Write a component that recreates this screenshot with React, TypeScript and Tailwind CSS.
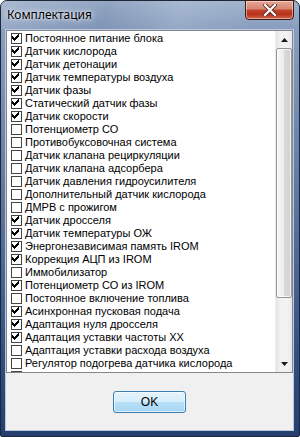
import React from "react";

const items: [string, boolean][] = [
  ["Постоянное питание блока", true],
  ["Датчик кислорода", true],
  ["Датчик детонации", true],
  ["Датчик температуры воздуха", true],
  ["Датчик фазы", true],
  ["Статический датчик фазы", true],
  ["Датчик скорости", true],
  ["Потенциометр СО", false],
  ["Противобуксовочная система", false],
  ["Датчик клапана рециркуляции", false],
  ["Датчик клапана адсорбера", false],
  ["Датчик давления гидроусилителя", false],
  ["Дополнительный датчик кислорода", false],
  ["ДМРВ с прожигом", false],
  ["Датчик дросселя", true],
  ["Датчик температуры ОЖ", true],
  ["Энергонезависимая память IROM", true],
  ["Коррекция АЦП из IROM", true],
  ["Иммобилизатор", false],
  ["Потенциометр СО из IROM", true],
  ["Постоянное включение топлива", false],
  ["Асинхронная пусковая подача", true],
  ["Адаптация нуля дросселя", true],
  ["Адаптация уставки частоты ХХ", true],
  ["Адаптация уставки расхода воздуха", false],
  ["Регулятор подогрева датчика кислорода", false],
  ["", false],
];

const checkPixels: [number, number][] = [
  [7, 1],
  [6, 2], [7, 2],
  [1, 3], [5, 3], [6, 3], [7, 3],
  [1, 4], [2, 4], [4, 4], [5, 4], [6, 4],
  [1, 5], [2, 5], [3, 5], [4, 5], [5, 5],
  [2, 6], [3, 6], [4, 6],
  [3, 7],
];

function Check({ checked }: { checked: boolean }) {
  return (
    <div className="w-[11px] h-[11px] border border-[#444] bg-white relative shrink-0">
      {checked && (
        <svg
          width="9"
          height="9"
          viewBox="0 0 9 9"
          className="absolute left-0 top-0"
          shapeRendering="crispEdges"
        >
          {checkPixels.map(([x, y], i) => (
            <rect key={i} x={x - 1} y={y - 1} width="1" height="1" fill="#000" />
          ))}
        </svg>
      )}
    </div>
  );
}

export default function App() {
  return (
    <div className="w-[300px] h-[437px] bg-white overflow-hidden">
      <div className="w-[300px] h-[437px] rounded-t-[7px] rounded-b-[2px] border border-[#1d2738] bg-[linear-gradient(180deg,#9fb2cc_0%,#8a9fbf_6%,#6f87ad_30%,#4d6895_60%,#2f4c80_85%,#253f70_100%)] flex flex-col relative">
        {/* title bar */}
        <div className="h-[28px] shrink-0 relative bg-[linear-gradient(100deg,rgba(255,255,255,0.12)_0%,rgba(60,80,120,0.12)_35%,rgba(255,255,255,0.1)_60%,rgba(255,255,255,0)_85%)]">
          <div className="absolute left-[6px] top-[6px] text-[12px] leading-[15px] text-black font-['Noto_Sans',sans-serif] [text-shadow:0_0_6px_rgba(255,255,255,0.95),0_0_3px_rgba(255,255,255,0.8)]">
            Комплектация
          </div>
          <div className="absolute left-[244px] top-[-1px] w-[49px] h-[20px] rounded-b-[4px] border border-[#3d1a14] bg-[linear-gradient(180deg,#e4a594_0%,#d6846f_45%,#c2422b_50%,#b8321d_75%,#d2674c_100%)] shadow-[inset_0_0_0_1px_rgba(255,255,255,0.45)] flex items-center justify-center">
            <svg width="14" height="12" viewBox="0 0 14 12">
              <path
                d="M2 1 L12 11 M12 1 L2 11"
                stroke="#5a2a22"
                strokeWidth="4"
                strokeLinecap="square"
              />
              <path
                d="M2 1 L12 11 M12 1 L2 11"
                stroke="#ffffff"
                strokeWidth="2.2"
                strokeLinecap="square"
              />
            </svg>
          </div>
        </div>
        {/* client */}
        <div className="flex-1 ml-[5px] mr-[6px] mb-[6px] mt-[1px] bg-[#f0f0f0] shadow-[0_0_0_1px_#b9c8dd] flex flex-col font-['Liberation_Sans',Arial,sans-serif]">
          {/* listbox */}
          <div className="h-[343px] border border-[#828790] bg-white flex overflow-hidden">
            <div className="flex-1 pt-[1px] overflow-hidden">
              {items.map(([label, checked], i) => (
                <div key={i} className="h-[13px] flex items-center pl-[4px] gap-[3px]">
                  <Check checked={checked} />
                  {label && (
                    <span className="text-[11px] leading-[13px] text-black whitespace-nowrap">
                      {label}
                    </span>
                  )}
                </div>
              ))}
            </div>
            {/* scrollbar */}
            <div className="w-[17px] shrink-0 flex flex-col bg-[linear-gradient(90deg,#e6e6e6,#f2f2f2_30%,#f2f2f2_70%,#e9e9e9)] border-l border-[#ececec]">
              <div className="h-[17px] flex items-center justify-center">
                <svg width="7" height="4" viewBox="0 0 7 4">
                  <path d="M3.5 0 L7 4 L0 4 Z" fill="#1a1a1a" />
                </svg>
              </div>
              <div className="h-[250px] rounded-[2px] border border-[#959595] bg-[linear-gradient(90deg,#f7f7f7_0%,#ececec_50%,#dadada_51%,#d2d2d2_100%)] shadow-[inset_0_0_0_1px_rgba(255,255,255,0.7)]" />
              <div className="flex-1" />
              <div className="h-[17px] flex items-center justify-center">
                <svg width="7" height="4" viewBox="0 0 7 4">
                  <path d="M0 0 L7 0 L3.5 4 Z" fill="#1a1a1a" />
                </svg>
              </div>
            </div>
          </div>
          {/* button row */}
          <div className="flex-1 flex items-start justify-center pt-[18px]">
            <div className="w-[73px] h-[22px] rounded-[3px] border border-[#3c7fb1] bg-[linear-gradient(180deg,#e5f4fc_0%,#d6eefb_48%,#b8e1f8_50%,#a6d6f3_100%)] shadow-[inset_0_0_0_1px_rgba(255,255,255,0.6)] flex items-center justify-center text-[12px] text-black leading-none">
              OK
            </div>
          </div>
        </div>
      </div>
    </div>
  );
}
